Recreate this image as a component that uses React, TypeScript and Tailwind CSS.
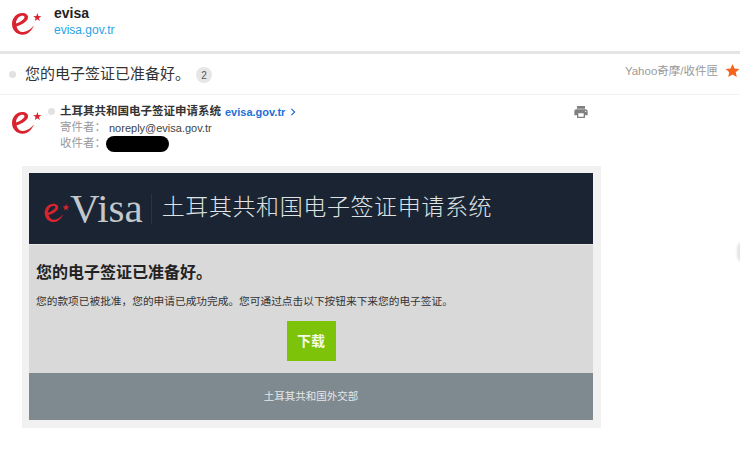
const cjk = { fontFamily: '"Liberation Sans", "Noto Sans CJK SC", sans-serif' };

function Logo({ className }: { className: string }) {
  return (
    <svg viewBox="0 0 32 28" className={className}>
      <path
        fillRule="evenodd"
        fill="#d9232e"
        d="M2 14 C2 7.5 7 3 12 3 C16 3 18.5 5 18 8 C17.5 11.5 11.5 15 6.5 16.5 C7.5 20 10 22.5 13.5 22 C17 21.7 21 19 24 15.5 C22 20 18 25 12.5 24.8 C6.5 24.6 2 20 2 14 Z M6 13.5 C9.5 12.5 14 9.5 14.5 7.5 C14.8 6 13 5.5 11.5 5.8 C8.5 6.5 6 10 6 13.5 Z"
      />
      <path d="M27.5 3 L28.3 6 L31.4 6.2 L28.9 8 L29.9 11 L27.3 9.3 L24.8 11 L25.6 8 L23.2 6.2 L26.3 6 Z" fill="#d9232e" />
    </svg>
  );
}

export default function App() {
  return (
    <div className="relative w-[740px] h-[458px] overflow-hidden bg-white" style={cjk}>
      <header className="h-[54px] border-b-[3px] border-[#e4e4e4] flex items-start pl-[10px] pt-[10px]">
        <Logo className="w-[32px] h-[28px]" />
        <div className="ml-[12px] -mt-[6px]">
          <div className="text-[14px] leading-[18px] font-bold text-[#222]">evisa</div>
          <div className="text-[12px] leading-[16px] text-[#2aa3e8]">evisa.gov.tr</div>
        </div>
      </header>

      <section className="h-[41px] border-b border-[#f3f3f3] flex items-center pl-[9px]">
        <span className="w-[7px] h-[7px] rounded-full bg-[#e2e2e2]" />
        <h1 className="ml-[9px] text-[15px] text-[#333] leading-[20px]">您的电子签证已准备好。</h1>
        <span className="ml-[6px] mt-[2px] w-[16px] h-[16px] rounded-full bg-[#e6e6e6] text-[10px] text-[#555] flex items-center justify-center">2</span>
        <span className="ml-auto -mt-[5px] text-[11.5px] text-[#9a9a9a]">Yahoo奇摩/收件匣</span>
        <svg viewBox="0 0 24 24" className="ml-[7px] -mt-[7px] w-[15px] h-[15px] fill-[#f4641e]">
          <path d="M12 1.5 L15.2 8.6 L23 9.4 L17.2 14.6 L18.8 22.3 L12 18.4 L5.2 22.3 L6.8 14.6 L1 9.4 L8.8 8.6 Z" />
        </svg>
      </section>

      <section className="relative h-[71px] flex items-start pl-[10px] pt-[14px]">
        <Logo className="w-[32px] h-[28px]" />
        <span className="ml-[6px] -mt-[1px] w-[7px] h-[7px] rounded-full bg-[#e2e2e2]" />
        <div className="ml-[5px] -mt-[5px] w-[520px]">
          <div className="flex items-center h-[16px] text-[11.5px]">
            <span className="font-bold text-[#333]">土耳其共和国电子签证申请系统</span>
            <span className="ml-[4px] text-[11px] font-bold text-[#1f6fd8]">evisa.gov.tr</span>
            <svg viewBox="0 0 10 10" className="ml-[4px] w-[8px] h-[8px] fill-none stroke-[#1f6fd8] stroke-[1.5]">
              <path d="M3 1 L7 5 L3 9" />
            </svg>
          </div>
          <div className="flex h-[16px] items-center text-[11.5px] text-[#999]">
            <span className="w-[49px]">寄件者：</span>
            <span className="text-[11px] text-[#444]">noreply@evisa.gov.tr</span>
          </div>
          <div className="flex h-[16px] items-center text-[11.5px] text-[#999]">
            <span className="w-[46px]">收件者：</span>
            <span className="w-[63px] h-[16px] rounded-full bg-black" />
          </div>
        </div>
        <svg viewBox="0 0 24 24" className="absolute left-[573px] top-[9px] w-[16px] h-[16px] fill-[#808080]">
          <path d="M19 8H5c-1.66 0-3 1.34-3 3v6h4v4h12v-4h4v-6c0-1.66-1.34-3-3-3zm-3 11H8v-5h8v5zm3-7c-.55 0-1-.45-1-1s.45-1 1-1 1 .45 1 1-.45 1-1 1zm-1-9H6v4h12V3z" />
        </svg>
      </section>

      <article className="ml-[22px] w-[579px] h-[262px] bg-[#f1f1f1] p-[7px]">
        <div className="w-[564px]">
          <div className="h-[72px] bg-[#1a2432] border-b border-[#e8e8e8] flex items-center pl-[14px]">
            <Logo className="w-[27px] h-[24px] mt-[8px]" />
            <span className="text-[41px] leading-none text-[#c3c8cc]" style={{ fontFamily: '"Liberation Serif", serif' }}>Visa</span>
            <span className="ml-[8px] w-px h-[30px] bg-[#2a3542]" />
            <span className="ml-[10px] text-[23px] tracking-[0.6px] text-[#dfe2e4] font-light leading-none -mt-[3px]">土耳其共和国电子签证申请系统</span>
          </div>
          <div className="h-[128px] bg-[#d9d9d9] px-[7px] pt-[18px]">
            <h2 className="text-[16px] leading-[20px] font-bold text-[#222]">您的电子签证已准备好。</h2>
            <p className="mt-[11px] text-[10.7px] leading-[14px] text-[#333]">您的款项已被批准，您的申请已成功完成。您可通过点击以下按钮来下来您的电子签证。</p>
            <button className="block mx-auto mt-[13px] w-[49px] h-[40px] bg-[#7dc30a] text-[14px] font-bold text-[#f4fbe8]">下载</button>
          </div>
          <div className="h-[47px] bg-[#7f8a90] flex items-center justify-center text-[10.5px] text-[#e4e7e8]">土耳其共和国外交部</div>
        </div>
      </article>

      <div className="absolute -right-[9px] top-[242px] w-[12px] h-[20px] rounded-full bg-[#e4e4e4] blur-[1px]" />
    </div>
  );
}
